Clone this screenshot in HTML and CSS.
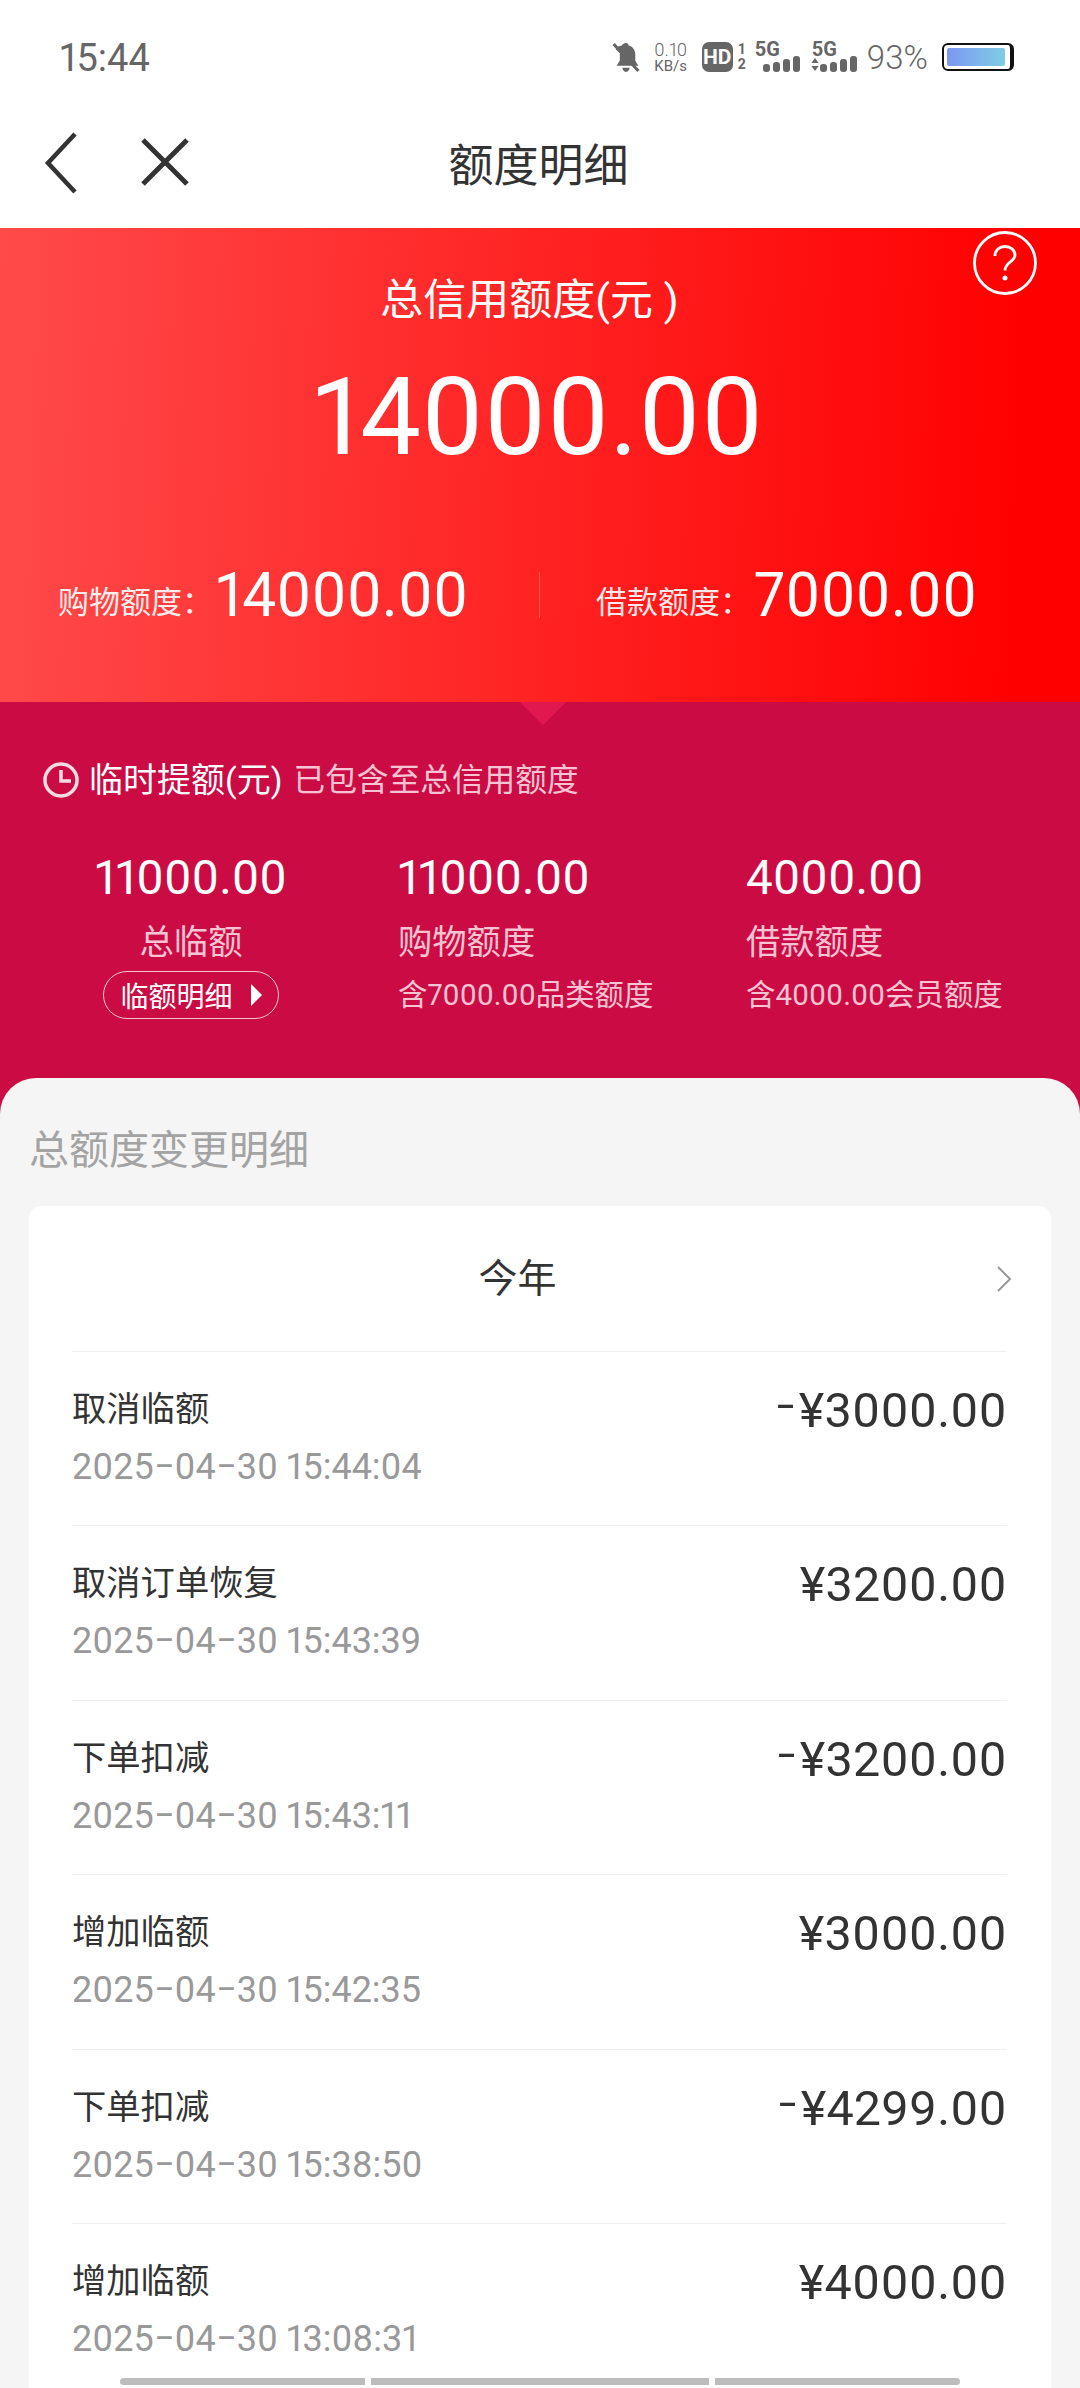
FILE: index.html
```html
<!DOCTYPE html>
<html lang="zh-CN">
<head>
    <meta charset="UTF-8">
    <meta name="viewport" content="width=device-width, initial-scale=1.0">
    <title>额度明细</title>
    <link rel="stylesheet" href="styles.css">
</head>
<body>
    <div class="status-bar">
        <span class="status-time">15:44</span>
        <div class="status-icons">
            <svg class="ic-bell" viewBox="0 0 28 30">
                <path d="M14 1c1.500 0 2.500 1 2.500 2.300 4.500 1.200 6.500 4.700 6.500 9v6l3 4.700H5L8 18v-7L4 7c1-2 3-3.200 6-3.700C10.500 2 12.500 1 14 1zM10.500 25h7c0 2-1.500 4-3.500 4s-3.500-2-3.500-4z"/>
                <path class="bell-slash" d="M2 2l24 26"/>
            </svg>
            <div class="net-speed">
                <span>0.10</span>
                <span class="net-unit">KB/s</span>
            </div>
            <div class="hd-badge">HD</div>
            <div class="sim-nums">
                <span>1</span>
                <span>2</span>
            </div>
            <div class="signal">
                <span class="signal-type">5G</span>
                <div class="bars"><i class="b1"></i><i class="b2"></i><i class="b3"></i><i class="b4"></i></div>
            </div>
            <div class="signal">
                <span class="signal-type">5G</span>
                <div class="bars">
                    <svg class="updown" viewBox="0 0 10 16"><path d="M5 0l4.500 6h-9zM5 16L.5 10h9z"/></svg>
                    <i class="b1"></i><i class="b2"></i><i class="b3"></i><i class="b4"></i>
                </div>
            </div>
            <span class="battery-pct">93%</span>
            <div class="battery"><div class="battery-fill"></div></div>
        </div>
    </div>

    <div class="nav-bar">
        <svg class="nav-back" viewBox="0 0 34 62"><path d="M31 2L4 31l27 29"/></svg>
        <svg class="nav-close" viewBox="0 0 50 50"><path d="M3 3l44 44M47 3L3 47"/></svg>
        <div class="nav-title">额度明细</div>
    </div>

    <div class="total-box">
        <svg class="help-icon" viewBox="0 0 64 64">
            <circle cx="32" cy="32" r="30.500"/>
            <path d="M22 25c0-6 4.500-9.500 10-9.500s10 3.500 10 8.500c0 7-10 7-10 15.500"/>
            <circle class="help-dot" cx="32" cy="47" r="2.500"/>
        </svg>
        <div class="total-label">总信用额度(元 )</div>
        <div class="total-num">14000.00</div>
        <div class="total-row">
            <div class="total-cell">
                <span class="cell-label">购物额度：</span><span class="cell-num">14000.00</span>
            </div>
            <div class="total-sep"></div>
            <div class="total-cell total-cell-right">
                <span class="cell-label">借款额度：</span><span class="cell-num">7000.00</span>
            </div>
        </div>
    </div>

    <div class="temp-box">
        <div class="temp-arrow"></div>
        <div class="temp-head">
            <svg class="clock-icon" viewBox="0 0 36 36">
                <circle cx="18" cy="18" r="16"/>
                <path d="M18 8v11h10"/>
            </svg>
            <span class="temp-title">临时提额(元)</span>
            <span class="temp-note">已包含至总信用额度</span>
        </div>
        <div class="temp-grid">
            <div class="temp-col temp-col-center">
                <div class="temp-num">11000.00</div>
                <div class="temp-name">总临额</div>
                <div class="temp-btn">临额明细<span class="btn-arrow"></span></div>
            </div>
            <div class="temp-col">
                <div class="temp-num">11000.00</div>
                <div class="temp-name">购物额度</div>
                <div class="temp-sub">含7000.00品类额度</div>
            </div>
            <div class="temp-col">
                <div class="temp-num">4000.00</div>
                <div class="temp-name">借款额度</div>
                <div class="temp-sub">含4000.00会员额度</div>
            </div>
        </div>
    </div>

    <div class="sheet">
        <div class="sheet-title">总额度变更明细</div>
        <div class="card">
            <div class="card-head">
                <span class="head-text">今年</span>
                <svg class="head-arrow" viewBox="0 0 16 26"><path d="M2 1l12 12L2 25"/></svg>
            </div>
            <div class="row">
                <div>
                    <div class="row-name">取消临额</div>
                    <div class="row-date">2025<span class="dash">-</span>04<span class="dash">-</span>30 15:44:04</div>
                </div>
                <div class="row-amount"><span class="minus">-</span>¥3000.00</div>
            </div>
            <div class="row">
                <div>
                    <div class="row-name">取消订单恢复</div>
                    <div class="row-date">2025<span class="dash">-</span>04<span class="dash">-</span>30 15:43:39</div>
                </div>
                <div class="row-amount">¥3200.00</div>
            </div>
            <div class="row">
                <div>
                    <div class="row-name">下单扣减</div>
                    <div class="row-date">2025<span class="dash">-</span>04<span class="dash">-</span>30 15:43:11</div>
                </div>
                <div class="row-amount"><span class="minus">-</span>¥3200.00</div>
            </div>
            <div class="row">
                <div>
                    <div class="row-name">增加临额</div>
                    <div class="row-date">2025<span class="dash">-</span>04<span class="dash">-</span>30 15:42:35</div>
                </div>
                <div class="row-amount">¥3000.00</div>
            </div>
            <div class="row">
                <div>
                    <div class="row-name">下单扣减</div>
                    <div class="row-date">2025<span class="dash">-</span>04<span class="dash">-</span>30 15:38:50</div>
                </div>
                <div class="row-amount"><span class="minus">-</span>¥4299.00</div>
            </div>
            <div class="row">
                <div>
                    <div class="row-name">增加临额</div>
                    <div class="row-date">2025<span class="dash">-</span>04<span class="dash">-</span>30 13:08:31</div>
                </div>
                <div class="row-amount">¥4000.00</div>
            </div>
        </div>
    </div>

    <div class="scroll-marks">
        <span class="mark mark-left"></span>
        <span class="mark mark-mid"></span>
        <span class="mark mark-right"></span>
    </div>
</body>
</html>
```

FILE: styles.css
```css
* {
    margin: 0;
    padding: 0;
    box-sizing: border-box;
    font-family: Roboto, 'Noto Sans CJK SC', sans-serif;
    font-variant-numeric: proportional-nums;
}

body {
    position: relative;
    width: 1080px;
    height: 2388px;
    overflow: hidden;
    background: #fff;
}

/* status bar */
.status-bar {
    height: 114px;
    padding: 0 66px 0 60px;
    display: flex;
    align-items: center;
    justify-content: space-between;
    color: #666;
}

.status-time {
    font-size: 38px;
    margin-top: 2px;
}

.status-icons {
    display: flex;
    align-items: center;
    height: 40px;
}

.ic-bell {
    width: 30px;
    height: 31px;
    fill: #666;
}

.bell-slash {
    stroke: #666;
    stroke-width: 3;
    fill: none;
}

.net-speed {
    display: flex;
    flex-direction: column;
    align-items: center;
    width: 36px;
    margin-left: 12px;
    font-size: 18px;
    line-height: 18px;
    font-weight: 300;
}

.net-unit {
    font-size: 15px;
    line-height: 15px;
    font-weight: 400;
}

.hd-badge {
    width: 31px;
    height: 30px;
    margin-left: 13px;
    background: #666;
    border-radius: 7px;
    color: #fff;
    font-size: 21px;
    font-weight: 700;
    line-height: 30px;
    text-align: center;
}

.sim-nums {
    display: flex;
    flex-direction: column;
    align-items: center;
    width: 12px;
    margin-left: 3px;
    font-size: 14px;
    font-weight: 700;
    line-height: 15px;
}

.signal {
    position: relative;
    width: 45px;
    height: 30px;
    margin-left: 7px;
}

.signal + .signal {
    margin-left: 12px;
}

.signal-type {
    position: absolute;
    left: 0;
    top: -3px;
    font-size: 20px;
    font-weight: 700;
    line-height: 20px;
}

.bars {
    position: absolute;
    right: 0;
    bottom: 0;
    display: flex;
    align-items: flex-end;
    gap: 3px;
    height: 16px;
}

.bars i {
    display: block;
    width: 7px;
    background: #666;
    border-radius: 3px;
}

.b1 { height: 8px; }
.b2 { height: 10px; }
.b3 { height: 13px; }
.b4 { height: 16px; }

.updown {
    width: 8px;
    height: 15px;
    margin-right: -2px;
    fill: #666;
}

.battery-pct {
    margin-left: 10px;
    font-size: 33px;
    font-weight: 300;
}

.battery {
    width: 72px;
    height: 28px;
    margin-left: 14px;
    padding: 3px 5px 3px 3px;
    border: 2px solid #111;
    border-right-width: 4px;
    border-radius: 6px;
}

.battery-fill {
    height: 100%;
    background: linear-gradient(90deg, #7d97f2, #7fcde4);
    border-radius: 2px;
}

/* nav */
.nav-bar {
    position: relative;
    height: 114px;
    padding: 0 3px 18px 0;
    display: flex;
    align-items: center;
    justify-content: center;
}

.nav-title {
    font-size: 45px;
    color: #333;
}

.nav-back {
    position: absolute;
    left: 44px;
    top: 18px;
    width: 34px;
    height: 62px;
    fill: none;
    stroke: #333;
    stroke-width: 4.500;
}

.nav-close {
    position: absolute;
    left: 140px;
    top: 23px;
    width: 50px;
    height: 50px;
    fill: none;
    stroke: #333;
    stroke-width: 5;
}

/* total */
.total-box {
    position: relative;
    height: 474px;
    padding-top: 44px;
    padding-right: 3px;
    background: linear-gradient(92deg, #ff4a4a 0%, #ff0000 94%);
    color: #fff;
    text-align: center;
}

.help-icon {
    position: absolute;
    left: 973px;
    top: 3px;
    width: 64px;
    height: 64px;
    fill: none;
    stroke: #fff;
    stroke-width: 2.800;
}

.help-dot {
    fill: #fff;
    stroke: none;
}

.total-label {
    padding-right: 18px;
    font-size: 43px;
    line-height: 56px;
}

.total-num {
    margin-top: 29px;
    font-size: 108px;
    line-height: 120px;
}

.total-row {
    display: flex;
    align-items: center;
    margin-top: 78px;
    height: 80px;
    text-align: left;
}

.total-cell {
    flex: 1;
    padding-left: 58px;
}

.total-cell-right {
    padding-left: 56px;
}

.total-sep {
    width: 1px;
    height: 46px;
    background: rgba(255, 255, 255, 0.25);
}

.cell-label {
    font-size: 31px;
    opacity: 0.9;
    vertical-align: 3px;
}

.cell-num {
    margin-left: 3px;
    font-size: 60.500px;
}

/* temporary quota */
.temp-box {
    position: relative;
    height: 412px;
    padding-top: 58px;
    background: #cb0c44;
    color: #fff;
}

.temp-arrow {
    position: absolute;
    left: 520px;
    top: 0;
    width: 0;
    height: 0;
    border-left: 23px solid transparent;
    border-right: 23px solid transparent;
    border-top: 23px solid #e0184f;
}

.temp-head {
    display: flex;
    align-items: center;
    height: 40px;
    padding-left: 43px;
}

.clock-icon {
    width: 36px;
    height: 36px;
    fill: none;
    stroke: #f8dbe3;
    stroke-width: 3.500;
}

.temp-title {
    margin: 0 0 6px 10px;
    font-size: 34px;
}

.temp-note {
    margin: 0 0 6px 11px;
    font-size: 31.700px;
    color: #f8c4d3;
}

.temp-grid {
    display: grid;
    grid-template-columns: 238px 260px 1fr;
    column-gap: 88px;
    margin-top: 48px;
    padding-left: 72px;
}

.temp-col-center {
    display: flex;
    flex-direction: column;
    align-items: center;
}

.temp-num {
    font-size: 47.500px;
    line-height: 60px;
}

.temp-name {
    margin-top: 12px;
    font-size: 34.300px;
    line-height: 44px;
    color: #f8c4d3;
}

.temp-btn {
    display: flex;
    align-items: center;
    justify-content: center;
    width: 176px;
    height: 48px;
    margin-top: 7px;
    border: 1px solid #f8c4d3;
    border-radius: 24px;
    font-size: 28px;
}

.btn-arrow {
    width: 0;
    height: 0;
    margin-left: 18px;
    border-left: 11px solid #fff;
    border-top: 11px solid transparent;
    border-bottom: 11px solid transparent;
}

.temp-sub {
    margin-top: 7px;
    font-size: 29.400px;
    line-height: 48px;
    color: #f8c4d3;
}

/* sheet */
.sheet {
    position: relative;
    height: 1310px;
    margin-top: -36px;
    padding: 43px 29px 0;
    background: #f5f5f5;
    border-radius: 36px 36px 0 0;
}

.sheet-title {
    font-size: 40px;
    line-height: 60px;
    color: #a3a3a3;
}

.card {
    margin-top: 25px;
    padding: 0 44px 0 43px;
    background: #fff;
    border-radius: 12px 12px 0 0;
}

.card-head {
    position: relative;
    height: 145px;
    padding: 0 44px 8px 0;
    display: flex;
    align-items: center;
    justify-content: center;
    font-size: 39px;
    color: #333;
}

.head-arrow {
    position: absolute;
    right: -5px;
    top: 60px;
    width: 16px;
    height: 26px;
    fill: none;
    stroke: #999;
    stroke-width: 2;
}

.row {
    display: flex;
    justify-content: space-between;
    align-items: flex-start;
    height: 174.400px;
    padding-top: 33px;
    border-top: 1px solid #eee;
}

.row-name {
    font-size: 34.300px;
    line-height: 48px;
    color: #333;
}

.row-date {
    margin-top: 12px;
    font-size: 36px;
    line-height: 44px;
    color: #999;
}

/* the hyphens in the dates are drawn longer than the font's */
.dash {
    display: inline-block;
    padding: 0 5.500px;
    line-height: 0;
    vertical-align: 2px;
    transform: scaleX(1.7);
}

.row-amount {
    margin-top: 1px;
    font-size: 48.500px;
    line-height: 50px;
    letter-spacing: 0.200px;
    color: #333;
}

.minus {
    display: inline-block;
    line-height: 0;
    font-size: 64px;
    font-weight: 300;
    letter-spacing: 4px;
}

/* bottom scroll marks */
.scroll-marks {
    position: absolute;
    left: 120px;
    top: 2378px;
    display: flex;
    gap: 6px;
}

.mark {
    display: block;
    height: 7px;
    background: #bdbdbd;
}

.mark-left {
    width: 245px;
    border-radius: 4px 0 0 4px;
}

.mark-mid {
    width: 338px;
}

.mark-right {
    width: 245px;
    border-radius: 0 4px 4px 0;
}
```
